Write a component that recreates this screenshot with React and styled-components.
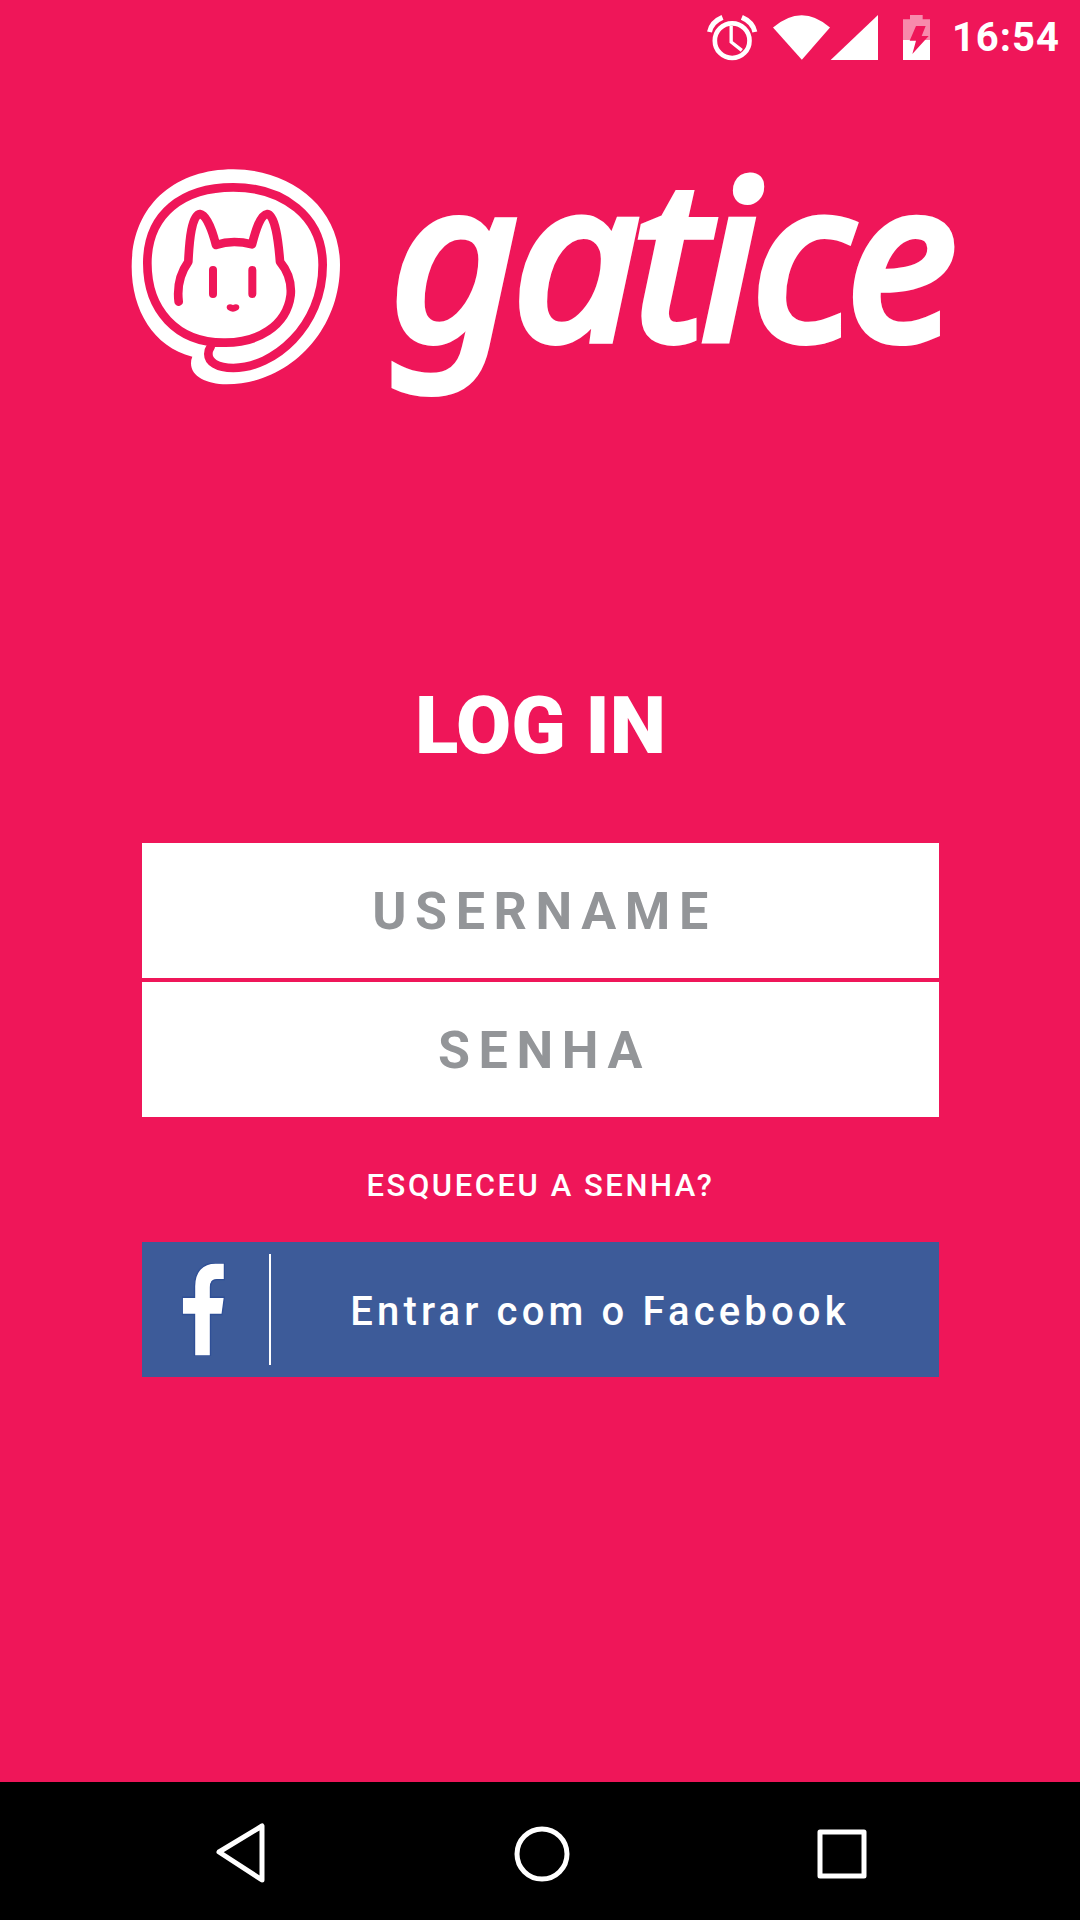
import React from "react";
import styled, { createGlobalStyle } from "styled-components";

const PINK = "#ef1659";

const Global = createGlobalStyle`
  html, body {
    margin: 0;
    padding: 0;
    background: ${PINK};
  }
`;

const Screen = styled.div`
  width: 1080px;
  height: 1920px;
  display: flex;
  flex-direction: column;
  background: ${PINK};
  font-family: Roboto, "Liberation Sans", sans-serif;
  overflow: hidden;
`;

const StatusBar = styled.div`
  height: 75px;
  flex: none;
  display: flex;
  align-items: center;
  justify-content: flex-end;
  padding-right: 20px;
`;

const StatusIcon = styled.svg`
  display: block;
  height: 47px;
  margin-left: ${(p) => p.$gap || 0}px;
  flex: none;
`;

const Clock = styled.span`
  margin-left: 22px;
  color: #fff;
  font-size: 40px;
  font-weight: 700;
  letter-spacing: 1px;
  line-height: 47px;
`;

const Main = styled.main`
  flex: 1;
  display: flex;
  flex-direction: column;
`;

const Brand = styled.div`
  display: flex;
  align-items: flex-start;
  height: 250px;
  margin-top: 75px;
  padding-left: 110px;
`;

const BrandMark = styled.svg`
  display: block;
  flex: none;
  width: 270px;
  height: 250px;
`;

const Wordmark = styled.span`
  margin-left: 10px;
  margin-top: -46px;
  color: #fff;
  font-family: "Noto Sans", sans-serif;
  font-size: 222px;
  font-style: italic;
  font-weight: 400;
  line-height: 300px;
  letter-spacing: -6px;
  -webkit-text-stroke: 8px #fff;
`;

const Form = styled.div`
  width: 797px;
  margin-left: 142px;
  display: flex;
  flex-direction: column;
`;

const Title = styled.h1`
  margin: 281px 0 0;
  height: 90px;
  color: #fff;
  font-size: 80px;
  font-weight: 900;
  line-height: 90px;
  text-align: center;
`;

const Fields = styled.div`
  margin-top: 72px;
  display: flex;
  flex-direction: column;
  gap: 4px;
`;

const Field = styled.div`
  height: 135px;
  box-sizing: border-box;
  display: flex;
  align-items: center;
  justify-content: center;
  padding: 2px 0 0 8px;
  background: #fff;
  color: #939598;
  font-size: 52px;
  font-weight: 700;
  letter-spacing: 8.6px;
`;

const Forgot = styled.a`
  margin-top: 48px;
  height: 42px;
  color: #fff;
  font-size: 31px;
  font-weight: 500;
  line-height: 42px;
  text-align: center;
  letter-spacing: 2.55px;
`;

const FacebookButton = styled.button`
  margin-top: 35px;
  height: 135px;
  padding: 12px 0;
  border: 0;
  display: flex;
  align-items: stretch;
  background: #3d5b99;
  color: #fff;
  font-family: inherit;
`;

const FacebookIconCell = styled.span`
  width: 129px;
  flex: none;
  display: flex;
  align-items: center;
  justify-content: flex-end;
  padding-right: 44px;
  box-sizing: border-box;
  border-right: 2px solid #fff;
`;

const FacebookLabel = styled.span`
  flex: 1;
  display: flex;
  align-items: center;
  justify-content: center;
  padding: 3px 10px 0 0;
  font-size: 40px;
  font-weight: 500;
  letter-spacing: 4.15px;
`;

const NavBar = styled.nav`
  height: 138px;
  flex: none;
  box-sizing: border-box;
  padding: 5px 0 0 4px;
  display: flex;
  align-items: center;
  justify-content: center;
  background: #000;
`;

const NavCell = styled.div`
  width: 300px;
  display: flex;
  justify-content: center;
`;

const NavIcon = styled.svg`
  display: block;
  width: 64px;
  height: 64px;
  fill: none;
  stroke: #fff;
  stroke-width: 5;
  stroke-linejoin: round;
`;

const Logo = () => (
  <BrandMark viewBox="0 0 810 750">
    <path
      d="M370 58C540 58 690 170 690 345C690 550 530 703 350 703C290 703 243 680 243 640Q243 628 247 620C130 590 65 480 65 350C65 170 190 58 370 58Z"
      fill="#fff"
    />
    <path
      d="M206 455C200 405 210 370 235 335C238 270 245 195 270 192C290 195 308 245 318 285C350 274 390 274 426 283C436 245 450 195 472 192C495 195 505 270 510 335C535 365 545 400 542 435C530 530 440 580 340 578C200 578 112 480 112 340C112 190 220 112 370 112C520 112 638 200 638 345C638 530 490 654 370 654C320 654 295 635 295 612Q295 600 302 590"
      fill="none"
      stroke={PINK}
      strokeWidth="26"
      strokeLinecap="round"
      strokeLinejoin="round"
    />
    <path
      d="M309 360V432M427 360V432"
      fill="none"
      stroke={PINK}
      strokeWidth="24"
      strokeLinecap="round"
    />
    <path
      d="M369 465C378 460 388 463 388 472C388 479 378 485 369 485C360 485 350 479 350 472C350 463 360 460 369 465Z"
      fill={PINK}
    />
  </BrandMark>
);

export default function App() {
  return (
    <Screen>
      <Global />
      <StatusBar>
        <StatusIcon viewBox="80 42 155 141" style={{ width: 52 }}>
          <circle cx="158" cy="122" r="52" fill="none" stroke="#fff" strokeWidth="14" />
          <path d="M155 78V126L187 151" fill="none" stroke="#fff" strokeWidth="10" />
          <path
            d="M90 96Q96 66 129 52M226 96Q220 66 187 52"
            fill="none"
            stroke="#fff"
            strokeWidth="15"
          />
        </StatusIcon>
        <StatusIcon viewBox="278 42 172 141" style={{ width: 57 }} $gap={15}>
          <path d="M365 180L278 82Q365 8 450 82Z" fill="#fff" />
        </StatusIcon>
        <StatusIcon viewBox="450 42 144 141" style={{ width: 48 }}>
          <path d="M452 180L594 45V180Z" fill="#fff" />
        </StatusIcon>
        <StatusIcon viewBox="669 42 81 141" style={{ width: 27 }} $gap={25}>
          <path d="M690 45H728V58H750V120H669V58H690Z" fill="#fff" fillOpacity="0.5" />
          <path d="M669 120H750V180H669Z" fill="#fff" />
          <path d="M708 78H737L725 108H746L697 162L708 122H689Z" fill={PINK} />
        </StatusIcon>
        <Clock>16:54</Clock>
      </StatusBar>
      <Main>
        <Brand>
          <Logo />
          <Wordmark>gatice</Wordmark>
        </Brand>
        <Form>
          <Title>LOG IN</Title>
          <Fields>
            <Field>USERNAME</Field>
            <Field>SENHA</Field>
          </Fields>
          <Forgot>ESQUECEU A SENHA?</Forgot>
          <FacebookButton>
            <FacebookIconCell>
              <svg viewBox="158 95 128 280" width="43" height="93" style={{ display: "block" }}>
                <path
                  d="M195 375V250H158V198H195V165C195 120 220 95 258 95H285V145H262C248 145 243 152 243 168V198H285L278 250H243V375Z"
                  fill="#fff"
                  stroke="#2f4f96"
                  strokeWidth="4"
                />
              </svg>
            </FacebookIconCell>
            <FacebookLabel>Entrar com o Facebook</FacebookLabel>
          </FacebookButton>
        </Form>
      </Main>
      <NavBar>
        <NavCell>
          <NavIcon viewBox="0 0 64 64">
            <path d="M9 30L52 4V58Z" />
          </NavIcon>
        </NavCell>
        <NavCell>
          <NavIcon viewBox="0 0 64 64">
            <circle cx="32" cy="32" r="25" />
          </NavIcon>
        </NavCell>
        <NavCell>
          <NavIcon viewBox="0 0 64 64">
            <rect x="10" y="10" width="44" height="44" />
          </NavIcon>
        </NavCell>
      </NavBar>
    </Screen>
  );
}
